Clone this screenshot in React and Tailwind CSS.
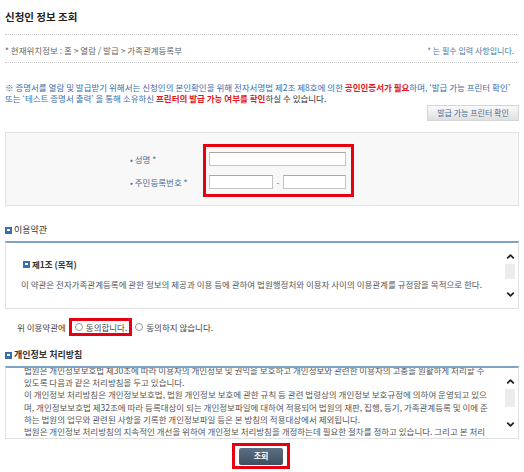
import React from 'react';
import { ChevronUp, ChevronDown } from 'lucide-react';

const Bullet = () => (
  <span className="inline-flex w-[7px] h-[7px] bg-[#3a6fae] items-center justify-center mr-[2px] shrink-0">
    <span className="w-[3px] h-[2px] bg-white" />
  </span>
);

const FakeScroll = ({ thumb }) => (
  <div className="w-[16px] flex flex-col items-center pt-[8px] pb-[8px]">
    <ChevronUp size={11} strokeWidth={4} className="text-[#222]" />
    <div className={`w-[10px] ${thumb} bg-[#ececec] mt-[2px]`} />
    <div className="flex-1" />
    <ChevronDown size={11} strokeWidth={4} className="text-[#222]" />
  </div>
);

const privacyLines = [
  '법원은 개인정보보호법 제30조에 따라 이용자의 개인정보 및 권익을 보호하고 개인정보와 관련한 이용자의 고충을 원활하게 처리할 수',
  '있도록 다음과 같은 처리방침을 두고 있습니다.',
  '이 개인정보 처리방침은 개인정보보호법, 법원 개인정보 보호에 관한 규칙 등 관련 법령상의 개인정보 보호규정에 의하여 운영되고 있으',
  '며, 개인정보보호법 제32조에 따라 등록대상이 되는 개인정보파일에 대하여 적용되어 법원의 재판, 집행, 등기, 가족관계등록 및 이에 준',
  '하는 법원의 업무와 관련된 사항을 기록한 개인정보파일 등은 본 방침의 적용대상에서 제외됩니다.',
  '법원은 개인정보 처리방침의 지속적인 개선을 위하여 개인정보 처리방침을 개정하는데 필요한 절차를 정하고 있습니다. 그리고 본 처리',
];

export default function App() {
  return (
    <div className="w-[524px] h-[472px] overflow-hidden bg-white px-[5px] font-['Noto_Sans_CJK_KR',sans-serif] text-[8.5px] text-[#555]">
      <h1 className="h-[34px] leading-[34px] text-[10.5px] font-bold text-[#222]">신청인 정보 조회</h1>
      <div className="border-t border-dotted border-[#c8c8c8] mr-[2px]" />

      <div className="h-[27px] pt-[4px] flex items-center justify-between">
        <span className="text-[#666]">* 현재위치정보 : 홈 &gt; 열람 / 발급 &gt; 가족관계등록부</span>
        <span className="text-[#4a78a8] mr-[5px] text-[8px]">* 는 필수 입력 사항입니다.</span>
      </div>
      <div className="border-t border-dotted border-[#c8c8c8] mr-[2px]" />

      <div className="mt-[19px] leading-[11px] text-[#3b6cab] whitespace-nowrap">
        <div>
          ※ 증명서를 열람 및 발급받기 위해서는 신청인의 본인확인을 위해 전자서명법 제2조 제8호에 의한{' '}
          <b className="text-[#e3161d]">공인인증서가 필요</b>하며, ‘발급 가능 프린터 확인’
        </div>
        <div>
          또는 ‘테스트 증명서 출력’ 을 통해 소유하신 <b className="text-[#e3161d]">프린터의 발급 가능 여부를 확인</b>
          <span className="text-[#333]">하실 수 있습니다.</span>
        </div>
      </div>

      <div className="mt-[1px] flex justify-end">
        <button className="h-[16px] w-[92px] border border-[#d4d4d4] bg-gradient-to-b from-[#fafafa] to-[#dfdfdf] text-[#4a6e98] text-[8px] leading-none">
          발급 가능 프린터 확인
        </button>
      </div>

      <div className="mt-[11px] h-[74px] border border-[#e2e2e2] bg-[#f8f8f8] flex items-start pl-[124px]">
        <div className="mt-[19px] w-[73px] flex flex-col gap-[9px] text-[#4b6b93]">
          <div className="h-[14px] flex items-center">• 성명 *</div>
          <div className="h-[14px] flex items-center">• 주민등록번호 *</div>
        </div>
        <div className="mt-[11px] border-[3px] border-[#e60012] pl-[3px] pr-[5px] py-[5px] flex flex-col gap-[9px]">
          <div className="w-[137px] h-[14px] border border-[#c4c4c4] border-t-[#a8a8a8] bg-white" />
          <div className="flex items-center">
            <div className="w-[64px] h-[14px] border border-[#c4c4c4] border-t-[#a8a8a8] bg-white" />
            <span className="w-[10px] text-center text-[#777]">-</span>
            <div className="w-[63px] h-[14px] border border-[#c4c4c4] border-t-[#a8a8a8] bg-white" />
          </div>
        </div>
      </div>

      <div className="mt-[17px] h-[14px] flex items-center text-[9px] text-[#333]">
        <Bullet />
        이용약관
      </div>
      <div className="mt-[4px] h-[68px] border border-[#e0e0e0] border-t-2 border-t-[#7ba3c8] flex">
        <div className="flex-1 pl-[15px]">
          <div className="mt-[15px] h-[12px] flex items-center pl-[2px] font-bold text-[#333]">
            <Bullet />
            제1조 (목적)
          </div>
          <div className="mt-[8px] h-[12px] flex items-center whitespace-nowrap">
            이 약관은 전자가족관계등록에 관한 정보의 제공과 이용 등에 관하여 법원행정처와 이용자 사이의 이용관계를 규정함을 목적으로 한다.
          </div>
        </div>
        <FakeScroll thumb="h-[15px]" />
      </div>

      <div className="mt-[9px] h-[18px] flex items-center pl-[12px] text-[#444]">
        <span className="mr-[3px]">위 이용약관에</span>
        <label className="h-[18px] border-[3px] border-[#e60012] flex items-center pl-[3px] pr-[2px] gap-[3px]">
          <span className="w-[8px] h-[8px] rounded-full border border-[#999] bg-white" />
          동의합니다.
        </label>
        <label className="ml-[3px] flex items-center gap-[3px]">
          <span className="w-[8px] h-[8px] rounded-full border border-[#999] bg-white" />
          동의하지 않습니다.
        </label>
      </div>

      <div className="mt-[12px] h-[14px] flex items-center text-[9px] font-bold text-[#333]">
        <Bullet />
        개인정보 처리방침
      </div>
      <div className="mt-[4px] h-[73px] border border-[#e0e0e0] border-t-2 border-t-[#7ba3c8] flex overflow-hidden">
        <div className="flex-1 pl-[18px] overflow-hidden">
          <div className="-mt-[4px] leading-[12.2px] whitespace-nowrap">
            {privacyLines.map((l, i) => (
              <div key={i}>{l}</div>
            ))}
          </div>
        </div>
        <FakeScroll thumb="h-[18px]" />
      </div>

      <div className="mt-[4px] flex justify-center pr-[2px]">
        <div className="w-[58px] h-[26px] border-[3px] border-[#e60012] flex items-center justify-center">
          <button className="w-[44px] h-[17px] rounded-[2px] bg-gradient-to-b from-[#5d7185] to-[#3d4e60] text-white text-[8px] font-bold leading-none">
            조회
          </button>
        </div>
      </div>
    </div>
  );
}
